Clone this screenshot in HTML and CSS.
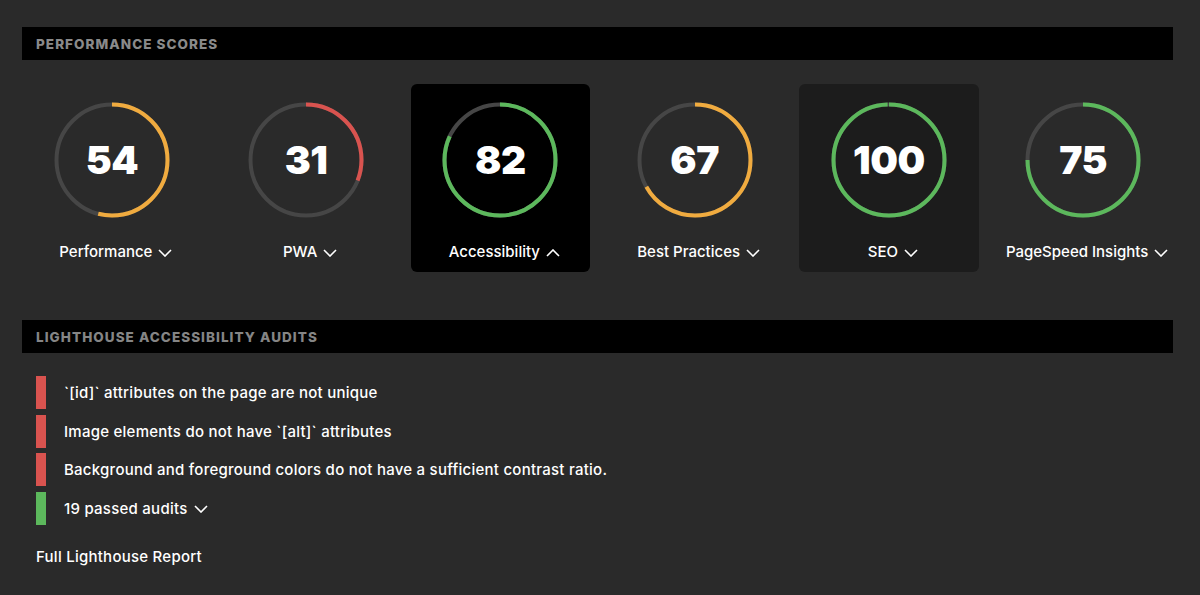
FILE: index.html
```html
<!DOCTYPE html>
<html lang="en">
<head>
<meta charset="utf-8">
<title>Performance Scores</title>
<link rel="stylesheet" href="styles.css">
</head>
<body>
<main class="page">
  <h2 class="section-head">Performance Scores</h2>
  <div class="scores">
    <div class="card">
      <svg class="gauge" viewBox="0 0 116 116" width="116" height="116">
        <circle class="track" cx="58" cy="58" r="55.5"/>
        <circle class="arc orange" cx="58" cy="58" r="55.5" pathLength="100" stroke-dasharray="54 100"/>
      </svg>
      <div class="score">54</div>
      <div class="label">Performance <svg class="chev" viewBox="0 0 14 8" width="14" height="8"><polyline points="1,1 7,7 13,1"/></svg></div>
    </div>
    <div class="card">
      <svg class="gauge" viewBox="0 0 116 116" width="116" height="116">
        <circle class="track" cx="58" cy="58" r="55.5"/>
        <circle class="arc red" cx="58" cy="58" r="55.5" pathLength="100" stroke-dasharray="31 100"/>
      </svg>
      <div class="score">31</div>
      <div class="label">PWA <svg class="chev" viewBox="0 0 14 8" width="14" height="8"><polyline points="1,1 7,7 13,1"/></svg></div>
    </div>
    <div class="card active">
      <svg class="gauge" viewBox="0 0 116 116" width="116" height="116">
        <circle class="track" cx="58" cy="58" r="55.5"/>
        <circle class="arc green" cx="58" cy="58" r="55.5" pathLength="100" stroke-dasharray="82 100"/>
      </svg>
      <div class="score">82</div>
      <div class="label">Accessibility <svg class="chev" viewBox="0 0 14 8" width="14" height="8"><polyline points="1,7 7,1 13,7"/></svg></div>
    </div>
    <div class="card">
      <svg class="gauge" viewBox="0 0 116 116" width="116" height="116">
        <circle class="track" cx="58" cy="58" r="55.5"/>
        <circle class="arc orange" cx="58" cy="58" r="55.5" pathLength="100" stroke-dasharray="67 100"/>
      </svg>
      <div class="score">67</div>
      <div class="label">Best Practices <svg class="chev" viewBox="0 0 14 8" width="14" height="8"><polyline points="1,1 7,7 13,1"/></svg></div>
    </div>
    <div class="card hover">
      <svg class="gauge" viewBox="0 0 116 116" width="116" height="116">
        <circle class="track" cx="58" cy="58" r="55.5"/>
        <circle class="arc green" cx="58" cy="58" r="55.5" pathLength="100" stroke-dasharray="99.6 100"/>
      </svg>
      <div class="score">100</div>
      <div class="label">SEO <svg class="chev" viewBox="0 0 14 8" width="14" height="8"><polyline points="1,1 7,7 13,1"/></svg></div>
    </div>
    <div class="card">
      <svg class="gauge" viewBox="0 0 116 116" width="116" height="116">
        <circle class="track" cx="58" cy="58" r="55.5"/>
        <circle class="arc green" cx="58" cy="58" r="55.5" pathLength="100" stroke-dasharray="75 100"/>
      </svg>
      <div class="score">75</div>
      <div class="label">PageSpeed Insights <svg class="chev" viewBox="0 0 14 8" width="14" height="8"><polyline points="1,1 7,7 13,1"/></svg></div>
    </div>
  </div>

  <h2 class="section-head second">Lighthouse Accessibility Audits</h2>
  <ul class="audits">
    <li class="audit fail"><span class="bar"></span>`[id]` attributes on the page are not unique</li>
    <li class="audit fail"><span class="bar"></span>Image elements do not have `[alt]` attributes</li>
    <li class="audit fail"><span class="bar"></span>Background and foreground colors do not have a sufficient contrast ratio.</li>
    <li class="audit pass"><span class="bar"></span>19 passed audits <svg class="chev" viewBox="0 0 14 8" width="14" height="8"><polyline points="1,1 7,7 13,1"/></svg></li>
  </ul>
  <a class="report" href="#">Full Lighthouse Report</a>
</main>
</body>
</html>
```

FILE: styles.css
```css
* { box-sizing: border-box; }
html, body {
  margin: 0;
  padding: 0;
  background: #2a2a2a;
}
body {
  font-family: Inter, "Noto Sans", sans-serif;
  color: #fff;
}
.page {
  width: 1151px;
  margin-left: 22px;
  padding-top: 27px;
}
.section-head {
  margin: 0;
  height: 33px;
  background: #000;
  display: flex;
  align-items: center;
  padding-left: 14px;
  font-size: 13.5px;
  font-weight: 800;
  letter-spacing: 1.05px;
  text-transform: uppercase;
  color: #8a8a8a;
}
.section-head.second {
  margin-top: 48px;
  color: #858585;
}
.scores {
  display: flex;
  gap: 14.5px;
  margin-top: 24px;
}
.card {
  position: relative;
  width: 180px;
  height: 188px;
  border-radius: 6px;
  display: flex;
  flex-direction: column;
  align-items: center;
  padding-top: 18px;
}
.card.active { background: #000; }
.card.hover { background: #1c1c1c; }
.gauge {
  display: block;
  transform: rotate(-90deg);
}
.gauge circle {
  fill: none;
  stroke-width: 4;
}
.track { stroke: #464646; }
.arc.orange { stroke: #f0ab3f; }
.arc.red { stroke: #d9534f; }
.arc.green { stroke: #5cb85c; }
.score {
  position: absolute;
  top: 17px;
  left: 0;
  right: 0;
  height: 116px;
  display: flex;
  align-items: center;
  justify-content: center;
  font-size: 39px;
  font-weight: 900;
  letter-spacing: -0.5px;
  color: #fff;
}
.label {
  margin-top: 24px;
  padding-left: 8px;
  font-size: 15px;
  font-weight: 500;
  line-height: 20px;
  display: flex;
  align-items: center;
  gap: 6px;
  white-space: nowrap;
}
.chev {
  display: block;
  fill: none;
  stroke: #fff;
  stroke-width: 1.6;
  margin-top: 2px;
}
.audits {
  list-style: none;
  margin: 23px 0 0 14px;
  padding: 0;
  display: flex;
  flex-direction: column;
  gap: 5.5px;
}
.audit {
  display: flex;
  align-items: center;
  height: 33px;
  font-size: 15px;
  font-weight: 500;
  letter-spacing: 0.25px;
  gap: 18px;
}
.audit .chev { margin-left: -12px; }
.bar {
  width: 10px;
  height: 33px;
  flex: none;
}
.fail .bar { background: #d9534f; }
.pass .bar { background: #5cb85c; }
.report {
  display: block;
  margin: 22px 0 0 14px;
  line-height: 20px;
  font-size: 15px;
  font-weight: 500;
  letter-spacing: 0.25px;
  color: #fff;
  text-decoration: none;
}
```
